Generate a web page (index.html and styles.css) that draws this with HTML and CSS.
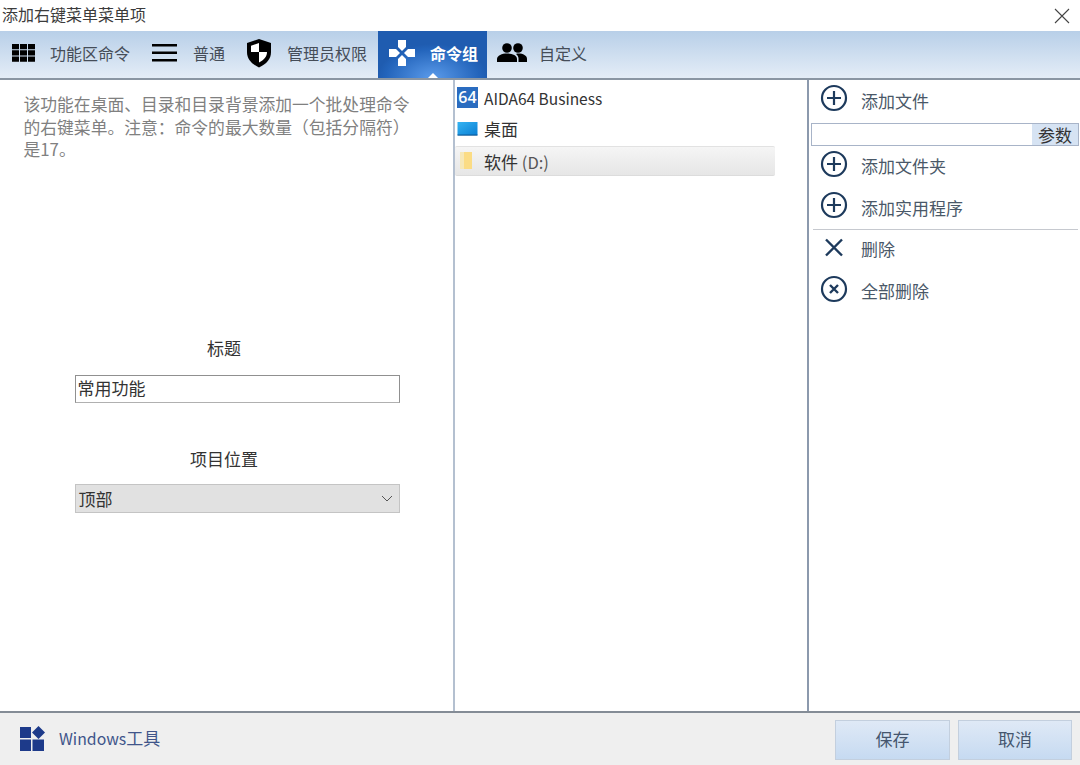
FILE: index.html
```html
<!DOCTYPE html>
<html lang="zh">
<head>
<meta charset="utf-8">
<title>添加右键菜单菜单项</title>
<link rel="stylesheet" href="styles.css">
</head>
<body>
<div class="window">
  <header class="titlebar">
    <span class="title">添加右键菜单菜单项</span>
    <svg class="close" width="16" height="16" viewBox="0 0 16 16"><path d="M1 1L15 15M15 1L1 15" stroke="#444" stroke-width="1.1" fill="none"/></svg>
  </header>
  <nav class="tabs">
    <div class="tab tab-ribbon">
      <svg class="tab-icon" width="24" height="18" viewBox="0 0 24 18"><path d="M0 0h7v5.300H0zM8 0h7v5.300H8zM16 0h7v5.300h-7zM0 6.200h7v5.300H0zM8 6.200h7v5.300H8zM16 6.200h7v5.300h-7zM0 12.400h7v5.300H0zM8 12.400h7v5.300H8zM16 12.400h7v5.300h-7z" fill="#000"/></svg>
      <span>功能区命令</span>
    </div>
    <div class="tab tab-general">
      <svg class="tab-icon" width="25" height="18" viewBox="0 0 25 18"><path d="M0 0h25v2.600H0zM0 7.500h25v2.600H0zM0 15h25v2.600H0z" fill="#000"/></svg>
      <span>普通</span>
    </div>
    <div class="tab tab-admin">
      <svg class="tab-icon" width="26" height="30" viewBox="0 0 26 30"><path d="M13 1L1 5v9c0 7 4.500 12 12 15.500 7.500-3.500 12-8.500 12-15.500V5z" fill="#000"/><path d="M13 5L5 7.800V14h8zM13 14v10.500c5-2.300 8-6 8-10.500z" fill="#fff"/></svg>
      <span>管理员权限</span>
    </div>
    <div class="tab tab-active">
      <svg class="tab-icon" width="28" height="28" viewBox="0 0 28 28"><path d="M10 1h8v7l-4 4-4-4zM1 10h7l4 4-4 4H1zM27 10h-7l-4 4 4 4h7zM10 27h8v-7l-4-4-4 4z" fill="#fff"/></svg>
      <span>命令组</span>
      <i class="tab-notch"></i>
    </div>
    <div class="tab tab-custom">
      <svg class="tab-icon" width="30" height="20" viewBox="0 0 30 20"><circle cx="10" cy="5" r="4.800" fill="#000"/><circle cx="21" cy="5" r="4.800" fill="#000"/><path d="M0 19v-3c0-3.500 5-5.500 10-5.500s10 2 10 5.500v3z" fill="#000"/><path d="M21.500 19v-3.500c0-2-1-3.500-2.500-4.600.8-.2 1.500-.4 2.500-.4 4.500 0 8.500 2 8.500 5.200V19z" fill="#000"/></svg>
      <span>自定义</span>
    </div>
  </nav>
  <main class="content">
    <section class="pane-left">
      <p class="desc">该功能在桌面、目录和目录背景添加一个批处理命令的右键菜单。注意：命令的最大数量（包括分隔符）是17。</p>
      <div class="form">
        <label class="field-label">标题</label>
        <div class="input">常用功能</div>
        <label class="field-label field-label-2">项目位置</label>
        <div class="select">
          <span>顶部</span>
          <svg width="12" height="7" viewBox="0 0 12 7"><path d="M1 1l5 5 5-5" stroke="#555" stroke-width="1" fill="none"/></svg>
        </div>
      </div>
    </section>
    <section class="pane-mid">
      <div class="item">
        <span class="badge64">64</span>
        <span class="latin">AIDA64 Business</span>
      </div>
      <div class="item">
        <svg class="item-icon" width="22" height="16" viewBox="0 0 22 16"><defs><linearGradient id="desk" x1="0" y1="0" x2="1" y2="1"><stop offset="0" stop-color="#35b4f2"/><stop offset="1" stop-color="#0a7fd4"/></linearGradient></defs><rect x="0.500" y="1" width="20" height="13" fill="url(#desk)"/><rect x="0.500" y="13.500" width="20" height="1.200" fill="#0a5a9a"/></svg>
        <span>桌面</span>
      </div>
      <div class="item item-selected">
        <svg class="item-icon" width="22" height="20" viewBox="0 0 22 20"><rect x="3" y="1" width="12" height="17" fill="#fbdc84"/><rect x="3" y="1" width="4" height="17" fill="#f6e8b8"/></svg>
        <span>软件 <span class="latin-gray">(D:)</span></span>
      </div>
    </section>
    <section class="pane-right">
      <div class="action action-first">
        <svg class="action-icon" width="28" height="28" viewBox="0 0 28 28"><circle cx="14" cy="14" r="12" stroke="#1d3a5c" stroke-width="2.200" fill="none"/><path d="M14 7v14M7 14h14" stroke="#1d3a5c" stroke-width="2.200"/></svg>
        <span>添加文件</span>
      </div>
      <div class="params">
        <span class="params-fill"></span>
        <span class="params-btn">参数</span>
      </div>
      <div class="action">
        <svg class="action-icon" width="28" height="28" viewBox="0 0 28 28"><circle cx="14" cy="14" r="12" stroke="#1d3a5c" stroke-width="2.200" fill="none"/><path d="M14 7v14M7 14h14" stroke="#1d3a5c" stroke-width="2.200"/></svg>
        <span>添加文件夹</span>
      </div>
      <div class="action">
        <svg class="action-icon" width="28" height="28" viewBox="0 0 28 28"><circle cx="14" cy="14" r="12" stroke="#1d3a5c" stroke-width="2.200" fill="none"/><path d="M14 7v14M7 14h14" stroke="#1d3a5c" stroke-width="2.200"/></svg>
        <span>添加实用程序</span>
      </div>
      <div class="sep"></div>
      <div class="action action-low">
        <svg class="action-icon" width="28" height="28" viewBox="0 0 28 28"><path d="M6 5.500l16 16M22 5.500l-16 16" stroke="#1d3a5c" stroke-width="2.400"/></svg>
        <span>删除</span>
      </div>
      <div class="action action-low">
        <svg class="action-icon" width="28" height="28" viewBox="0 0 28 28"><circle cx="14" cy="14" r="12" stroke="#1d3a5c" stroke-width="2.200" fill="none"/><path d="M10 10l8 8M18 10l-8 8" stroke="#1d3a5c" stroke-width="2.400"/></svg>
        <span>全部删除</span>
      </div>
    </section>
  </main>
  <footer class="footer">
    <div class="brand">
      <svg width="27" height="27" viewBox="0 0 27 27"><path d="M1 2h11v11H1zM1 14.500h11V26H1zM13.500 14.500H25V26H13.500z" fill="#1d3a8a"/><path d="M19.500 1l6.500 6.500-6.500 6.500L13 7.500z" fill="#1d3a8a"/></svg>
      <span class="brand-text"><span class="latin-brand">Windows</span>工具</span>
    </div>
    <div class="buttons">
      <div class="btn">保存</div>
      <div class="btn">取消</div>
    </div>
  </footer>
</div>
</body>
</html>
```
FILE: styles.css
```css
* { box-sizing: border-box; }
html, body { margin: 0; padding: 0; }
body {
  width: 1080px;
  height: 765px;
  overflow: hidden;
  background: #fff;
  font-family: "Noto Sans CJK SC", "Noto Sans", sans-serif;
  color: #333;
}
.window { width: 1080px; height: 765px; display: flex; flex-direction: column; }
.titlebar {
  height: 31px;
  flex: none;
  display: flex;
  align-items: center;
  justify-content: space-between;
  padding: 0 10px 2px 2px;
}
.title { font-size: 16px; color: #3c3c3c; line-height: 29px; }
.close { display: block; margin-top: 2px; }
.tabs {
  height: 49px;
  flex: none;
  display: flex;
  background: linear-gradient(#b8cfe8, #e4edf7);
  border-bottom: 2px solid #8a96a3;
}
.tab {
  position: relative;
  display: flex;
  align-items: center;
  font-size: 16px;
  color: #454d58;
  height: 47px;
  padding-bottom: 4px;
}
.tab-icon { flex: none; display: block; }
.tab-ribbon { width: 142px; padding-left: 12px; gap: 14px; }
.tab-general { width: 93px; padding-left: 11px; gap: 16px; margin-left: -1px; }
.tab-admin { width: 144px; padding-left: 12px; gap: 15px; }
.tab-active {
  width: 109px;
  padding-left: 10px;
  gap: 14px;
  color: #fff;
  font-weight: 700;
  background: radial-gradient(ellipse 55px 34px at 50% 100%, #5b9bea, #2364bb 85%, #1f5cb0);
}
.tab-notch {
  position: absolute;
  left: 50%;
  bottom: 0;
  margin-left: -5px;
  border-left: 5px solid transparent;
  border-right: 5px solid transparent;
  border-bottom: 5px solid #fff;
}
.tab-custom { padding-left: 10px; gap: 12px; }
.content { flex: 1; min-height: 0; display: flex; }
.pane-left { width: 453px; flex: none; padding: 13px 42px 0 23.500px; display: flex; flex-direction: column; }
.desc { margin: 0; font-size: 16.8px; line-height: 22.5px; color: #808080; }
.form { margin-top: 176.500px; display: flex; flex-direction: column; margin-left: 51px; width: 325px; }
.field-label { text-align: center; font-size: 17px; line-height: 22px; padding-bottom: 2px; color: #333; padding-right: 26px; }
.input {
  margin-top: 14px;
  height: 28px;
  border: 1px solid #909090;
  border-bottom-color: #b0b0b0;
  font-size: 17px;
  line-height: 24px;
  padding-left: 2px;
  color: #333;
}
.field-label-2 { margin-top: 45px; }
.select {
  margin-top: 12px;
  height: 29px;
  background: #e1e1e1;
  border: 1px solid #c4c4c4;
  display: flex;
  align-items: center;
  justify-content: space-between;
  padding: 0 6px 0 3px;
  font-size: 17px;
  color: #333;
}
.pane-mid {
  width: 356px;
  flex: none;
  border-left: 2px solid #b4c0d0;
  border-right: 2px solid #8c99ad;
  padding-top: 2px;
}
.item {
  width: 320px;
  height: 31px;
  display: flex;
  align-items: center;
  gap: 6px;
  font-size: 17px;
  color: #333;
  padding-left: 2px;
}
.item-selected {
  height: 30px;
  margin-top: 2px;
  background: linear-gradient(#f5f5f5, #e6e6e6);
  border-top: 1px solid #e2e2e2;
  border-bottom: 1px solid #dcdcdc;
  border-radius: 2px;
}
.latin { font-size: 15.500px; }
.latin-gray { color: #555; font-size: 16.500px; }
.badge64 {
  width: 21px;
  height: 21px;
  background: #2a6cc0;
  color: #fff;
  font-family: "Open Sans", sans-serif;
  font-weight: 600;
  font-size: 16px;
  line-height: 21px;
  text-align: center;
  flex: none;
}
.item-icon { flex: none; display: block; margin-right: -1px; }
.pane-right { flex: 1; min-width: 0; padding: 1px 1px 0 2px; }
.action {
  height: 41.500px;
  display: flex;
  align-items: center;
  padding-left: 9px;
  gap: 13px;
  font-size: 17px;
  color: #4a5868;
}
.action-first { height: 38px; }
.action-icon { flex: none; display: block; margin-top: -4px; }
.action-low span { margin-top: -2px; }
.params {
  height: 23px;
  display: flex;
  border: 1px solid #a8b4c8;
  margin-top: 4px;
  margin-bottom: -1px;
}
.params-fill { flex: 1; background: #fff; }
.params-btn {
  width: 46px;
  background: #d6e3f3;
  font-size: 17px;
  line-height: 21px;
  text-align: center;
  color: #333;
}
.sep { height: 1px; background: #c6c9cf; margin: 1px 1px -1px 2px; }
.footer {
  height: 54px;
  flex: none;
  background: #efefef;
  border-top: 2px solid #848c96;
  display: flex;
  align-items: flex-start;
  justify-content: space-between;
  padding-left: 19px;
  padding-right: 8px;
}
.brand {
  display: flex;
  align-items: center;
  gap: 13px;
  font-size: 17px;
  color: #40558a;
  height: 50px;
}
.brand-text { margin-top: -2px; }
.latin-brand { font-size: 15.800px; }
.buttons { display: flex; gap: 8px; padding-top: 7px; }
.btn {
  width: 115px;
  height: 40px;
  background: linear-gradient(#dfe9f6, #c6daf1);
  border: 1px solid #c3cfde;
  font-size: 17px;
  line-height: 36px;
  text-align: center;
  color: #45566e;
}
.btn + .btn { width: 114px; }
```
